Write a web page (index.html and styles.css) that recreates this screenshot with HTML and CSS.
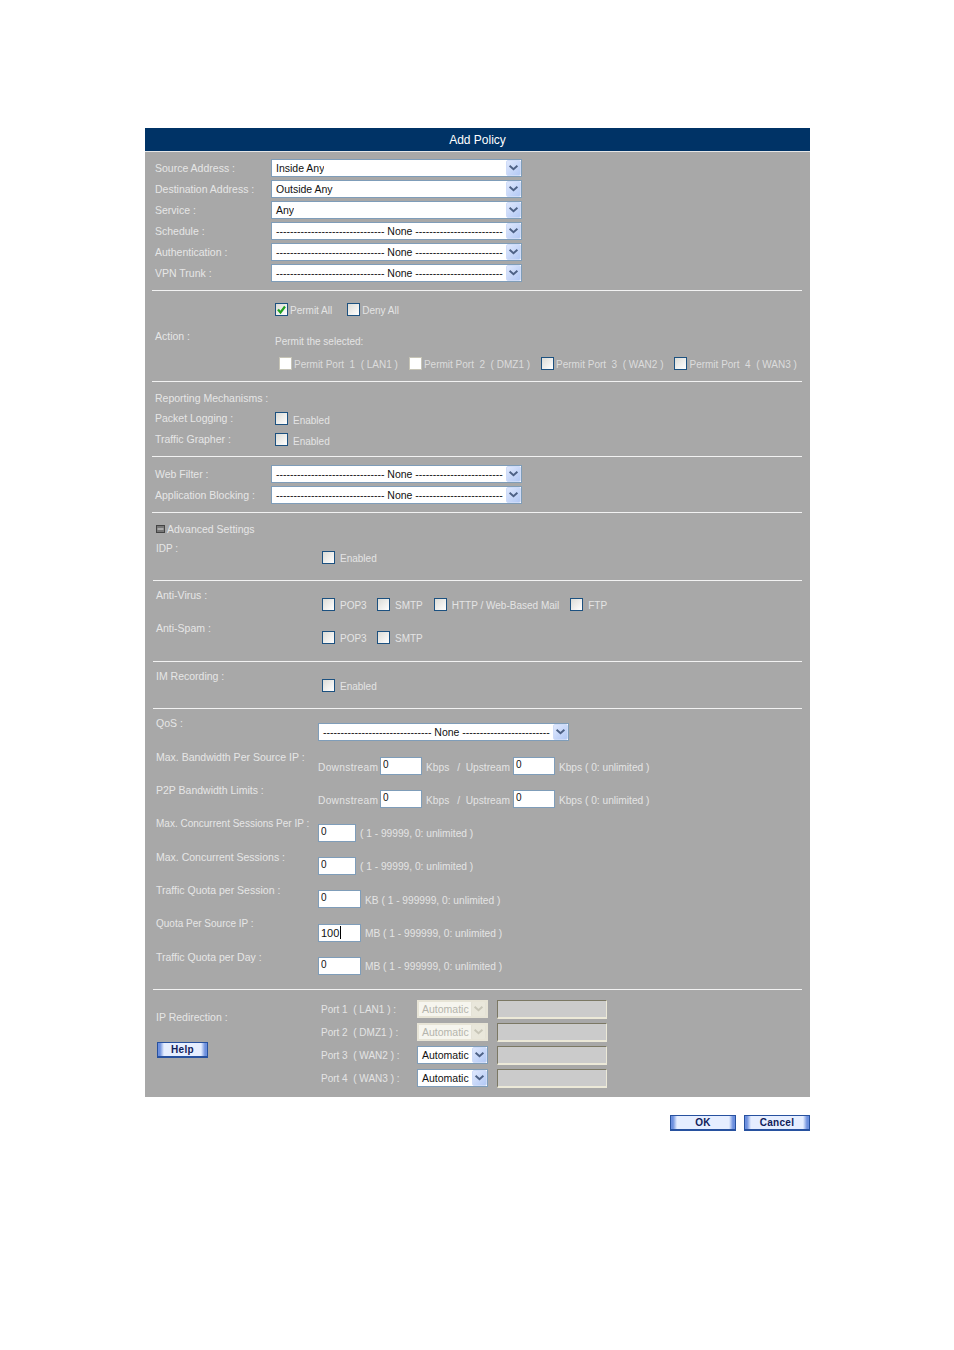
FILE: index.html
```html
<!DOCTYPE html>
<html lang="en">
<head>
<meta charset="utf-8">
<title>Add Policy</title>
<link rel="stylesheet" href="styles.css">
</head>
<body>
<main class="page">
<form class="panel">
  <h1 class="title">Add Policy</h1>

  <section class="sec sec-basic">
    <div class="sel-row"><span class="lbl">Source Address :</span><div class="sel wide"><span class="sel-text">Inside Any</span><span class="sel-btn"><svg viewBox="0 0 15 15"><polyline points="3,5 7.5,9 12,5"/></svg></span></div></div>
    <div class="sel-row"><span class="lbl">Destination Address :</span><div class="sel wide"><span class="sel-text">Outside Any</span><span class="sel-btn"><svg viewBox="0 0 15 15"><polyline points="3,5 7.5,9 12,5"/></svg></span></div></div>
    <div class="sel-row"><span class="lbl">Service :</span><div class="sel wide"><span class="sel-text">Any</span><span class="sel-btn"><svg viewBox="0 0 15 15"><polyline points="3,5 7.5,9 12,5"/></svg></span></div></div>
    <div class="sel-row"><span class="lbl">Schedule :</span><div class="sel wide"><span class="sel-text">------------------------------- None -------------------------</span><span class="sel-btn"><svg viewBox="0 0 15 15"><polyline points="3,5 7.5,9 12,5"/></svg></span></div></div>
    <div class="sel-row"><span class="lbl">Authentication :</span><div class="sel wide"><span class="sel-text">------------------------------- None -------------------------</span><span class="sel-btn"><svg viewBox="0 0 15 15"><polyline points="3,5 7.5,9 12,5"/></svg></span></div></div>
    <div class="sel-row"><span class="lbl">VPN Trunk :</span><div class="sel wide"><span class="sel-text">------------------------------- None -------------------------</span><span class="sel-btn"><svg viewBox="0 0 15 15"><polyline points="3,5 7.5,9 12,5"/></svg></span></div></div>
  </section>

  <section class="sec sec-action">
    <span class="lbl">Action :</span>
    <div class="action-body">
      <div class="checks action-top">
        <label class="chk"><span class="cb"><svg viewBox="0 0 11 11"><polyline points="2,5.5 4.5,8.5 9,2.5"/></svg></span><span class="chk-text">Permit All</span></label>
        <label class="chk"><span class="cb"></span><span class="chk-text">Deny All</span></label>
      </div>
      <p class="hint">Permit the selected:</p>
      <div class="checks ports">
        <label class="chk"><span class="cb off"></span><span class="chk-text">Permit Port&nbsp; 1 &nbsp;( LAN1 )</span></label>
        <label class="chk"><span class="cb off"></span><span class="chk-text">Permit Port&nbsp; 2 &nbsp;( DMZ1 )</span></label>
        <label class="chk"><span class="cb"></span><span class="chk-text">Permit Port&nbsp; 3 &nbsp;( WAN2 )</span></label>
        <label class="chk"><span class="cb"></span><span class="chk-text">Permit Port&nbsp; 4 &nbsp;( WAN3 )</span></label>
      </div>
    </div>
  </section>

  <section class="sec sec-report">
    <div class="lbl report-title">Reporting Mechanisms :</div>
    <div class="report-row"><span class="lbl">Packet Logging :</span><label class="chk low"><span class="cb"></span><span class="chk-text">Enabled</span></label></div>
    <div class="report-row"><span class="lbl">Traffic Grapher :</span><label class="chk low"><span class="cb"></span><span class="chk-text">Enabled</span></label></div>
  </section>

  <section class="sec sec-filter">
    <div class="sel-row"><span class="lbl">Web Filter :</span><div class="sel wide"><span class="sel-text">------------------------------- None -------------------------</span><span class="sel-btn"><svg viewBox="0 0 15 15"><polyline points="3,5 7.5,9 12,5"/></svg></span></div></div>
    <div class="sel-row"><span class="lbl">Application Blocking :</span><div class="sel wide"><span class="sel-text">------------------------------- None -------------------------</span><span class="sel-btn"><svg viewBox="0 0 15 15"><polyline points="3,5 7.5,9 12,5"/></svg></span></div></div>
  </section>

  <section class="sec sec-adv">
    <div class="adv-head"><svg class="adv-icon" viewBox="0 0 9 8"><rect x="0.5" y="0.5" width="8" height="7"/><line x1="1.5" y1="4" x2="7.5" y2="4"/></svg><span class="lbl">Advanced Settings</span></div>
    <div class="adv-row idp"><span class="lbl lbl-sm">IDP :</span><div class="checks adv-checks"><label class="chk"><span class="cb"></span><span class="chk-text">Enabled</span></label></div></div>
  </section>

  <section class="sec sec-av">
    <div class="adv-row av"><span class="lbl">Anti-Virus :</span><div class="checks adv-checks">
      <label class="chk"><span class="cb"></span><span class="chk-text pop">POP3</span></label>
      <label class="chk"><span class="cb"></span><span class="chk-text">SMTP</span></label>
      <label class="chk"><span class="cb"></span><span class="chk-text">HTTP / Web-Based Mail</span></label>
      <label class="chk"><span class="cb"></span><span class="chk-text">FTP</span></label>
    </div></div>
    <div class="adv-row av"><span class="lbl">Anti-Spam :</span><div class="checks adv-checks">
      <label class="chk"><span class="cb"></span><span class="chk-text pop">POP3</span></label>
      <label class="chk"><span class="cb"></span><span class="chk-text">SMTP</span></label>
    </div></div>
  </section>

  <section class="sec sec-im">
    <div class="adv-row"><span class="lbl">IM Recording :</span><div class="checks adv-checks"><label class="chk"><span class="cb"></span><span class="chk-text">Enabled</span></label></div></div>
  </section>

  <section class="sec sec-qos">
    <div class="q-row q-first"><span class="lbl">QoS :</span><div class="q-ctl q-ctl-sel"><div class="sel wide"><span class="sel-text">------------------------------- None -------------------------</span><span class="sel-btn"><svg viewBox="0 0 15 15"><polyline points="3,5 7.5,9 12,5"/></svg></span></div></div></div>
    <div class="q-row"><span class="lbl">Max. Bandwidth Per Source IP :</span><div class="q-ctl"><span class="ds">Downstream</span><input class="inp w42" value="0" readonly><span>Kbps</span><span class="slash">/ &nbsp;Upstream</span><input class="inp w42" value="0" readonly><span>Kbps ( 0: unlimited )</span></div></div>
    <div class="q-row"><span class="lbl">P2P Bandwidth Limits :</span><div class="q-ctl"><span class="ds">Downstream</span><input class="inp w42" value="0" readonly><span>Kbps</span><span class="slash">/ &nbsp;Upstream</span><input class="inp w42" value="0" readonly><span>Kbps ( 0: unlimited )</span></div></div>
    <div class="q-row"><span class="lbl lbl-sm">Max. Concurrent Sessions Per IP :</span><div class="q-ctl"><input class="inp w38" value="0" readonly><span>( 1 - 99999, 0: unlimited )</span></div></div>
    <div class="q-row"><span class="lbl">Max. Concurrent Sessions :</span><div class="q-ctl"><input class="inp w38" value="0" readonly><span>( 1 - 99999, 0: unlimited )</span></div></div>
    <div class="q-row"><span class="lbl">Traffic Quota per Session :</span><div class="q-ctl"><input class="inp w43" value="0" readonly><span>KB ( 1 - 999999, 0: unlimited )</span></div></div>
    <div class="q-row"><span class="lbl lbl-sm">Quota Per Source IP :</span><div class="q-ctl"><span class="inp w43 focus">100<i class="caret"></i></span><span>MB ( 1 - 999999, 0: unlimited )</span></div></div>
    <div class="q-row"><span class="lbl">Traffic Quota per Day :</span><div class="q-ctl"><input class="inp w43" value="0" readonly><span>MB ( 1 - 999999, 0: unlimited )</span></div></div>
  </section>

  <section class="sec-ip">
    <div class="ip-left">
      <span class="lbl">IP Redirection :</span>
      <button type="button" class="btn btn-help">Help</button>
    </div>
    <div class="ip-rows">
      <div class="ip-row"><span class="ip-name">Port 1 &nbsp;( LAN1 ) :</span><div class="sel auto dis"><span class="sel-text">Automatic</span><span class="sel-btn"><svg viewBox="0 0 15 15"><polyline points="3,5 7.5,9 12,5"/></svg></span></div><input class="ip-field" readonly></div>
      <div class="ip-row"><span class="ip-name">Port 2 &nbsp;( DMZ1 ) :</span><div class="sel auto dis"><span class="sel-text">Automatic</span><span class="sel-btn"><svg viewBox="0 0 15 15"><polyline points="3,5 7.5,9 12,5"/></svg></span></div><input class="ip-field" readonly></div>
      <div class="ip-row"><span class="ip-name">Port 3 &nbsp;( WAN2 ) :</span><div class="sel auto"><span class="sel-text">Automatic</span><span class="sel-btn"><svg viewBox="0 0 15 15"><polyline points="3,5 7.5,9 12,5"/></svg></span></div><input class="ip-field" readonly></div>
      <div class="ip-row"><span class="ip-name">Port 4 &nbsp;( WAN3 ) :</span><div class="sel auto"><span class="sel-text">Automatic</span><span class="sel-btn"><svg viewBox="0 0 15 15"><polyline points="3,5 7.5,9 12,5"/></svg></span></div><input class="ip-field" readonly></div>
    </div>
  </section>
</form>

<div class="actions">
  <button type="button" class="btn btn-main">OK</button>
  <button type="button" class="btn btn-main">Cancel</button>
</div>
</main>
</body>
</html>
```
FILE: styles.css
```css
* { box-sizing: border-box; }
html, body { margin: 0; background: #fff; }
body { font-family: "Liberation Sans", Arial, sans-serif; font-size: 10px; color: #e4e4e4; }

.page { width: 954px; height: 1350px; padding: 128px 144px 0 145px; }
.panel { display: block; background: #a8a8a8; }

.title {
  margin: 0; height: 24px; line-height: 24px;
  background: #003366; border-bottom: 1px solid #e6e6e6;
  color: #fff; font-size: 12px; font-weight: normal; text-align: center;
}

.lbl { font-size: 10.5px; line-height: 14px; white-space: nowrap; color: #e6e6e6; }
.lbl-sm { font-size: 10px; }

.sec { margin: 0 8px 0 7px; padding-left: 3px; border-bottom: 1px solid #f2f2f2; }
.sec-adv, .sec-av, .sec-im, .sec-qos { margin-left: 8px; padding-left: 2px; }

/* selects */
.sel {
  display: flex; align-items: center; justify-content: space-between;
  height: 18px; background: #fff; border: 1px solid #7f9db9;
  color: #111; font-size: 10.5px; white-space: nowrap; overflow: hidden;
}
.sel.wide { width: 251px; }
.sel-text { padding-left: 4px; line-height: 14px; overflow: hidden; }
.sel-btn {
  flex: none; width: 15px; height: 16px;
  background: linear-gradient(135deg, #dfe8fd, #b3c9f5);
  border: 1px solid #cfdcf8; border-radius: 2px;
}
.sel-btn svg { display: block; width: 13px; height: 14px; }
.sel-btn polyline { fill: none; stroke: #4d6185; stroke-width: 2.2; }

.sel-row { display: grid; grid-template-columns: 116px 251px; height: 21px; }
.sel-row .lbl { padding-top: 2px; }

.sec-basic { height: 139px; padding-top: 7px; }
.sec-filter { height: 56px; padding-top: 8px; }

/* checkboxes */
.checks { display: flex; align-items: flex-start; }
.chk { display: flex; align-items: flex-start; white-space: nowrap; }
.cb {
  flex: none; display: block; width: 13px; height: 13px;
  border: 1px solid #1c5180;
  background: linear-gradient(135deg, #dcdcd7, #ffffff);
}
.cb svg { display: block; width: 11px; height: 11px; }
.cb polyline { fill: none; stroke: #21a121; stroke-width: 2.2; }
.cb.off { border-color: #c6c4b6; background: #fff; }
.chk-text { margin: 1px 0 0 5px; line-height: 14px; color: #e4e4e4; }
.pop { width: 26px; }

/* action */
.sec-action { display: grid; grid-template-columns: 120px 1fr; align-items: center; height: 91px; }
.action-body { display: flex; flex-direction: column; align-self: start; padding-top: 12px; }
.action-top { height: 14px; gap: 15px; }
.action-top .chk-text { margin-left: 2px; }
.hint { margin: 18px 0 0; line-height: 14px; height: 14px; }
.ports { margin: 8px 0 0 4px; height: 14px; gap: 11px; width: 540px; }
.ports .chk-text { margin-left: 2px; color: #dcdcdc; }

/* reporting */
.sec-report { height: 75px; padding-top: 9px; }
.report-title { height: 20px; }
.report-row { display: grid; grid-template-columns: 120px 1fr; height: 21px; }
.low { height: 14px; margin-top: 2px; }
.low .cb { margin-top: -1px; }

/* advanced */
.adv-head { display: flex; align-items: center; gap: 2px; height: 14px; margin-left: 1px; }
.adv-icon { width: 9px; height: 8px; }
.adv-icon rect { fill: #777; stroke: #444; }
.adv-icon line { stroke: #e0e0e0; }
.sec-adv { height: 68px; padding-top: 9px; }
.adv-row { display: grid; grid-template-columns: 166px 1fr; padding-left: 1px; }
.adv-row .lbl { height: 14px; }
.adv-checks { height: 14px; margin-top: 10px; gap: 11px; }
.idp { margin-top: 6px; }
.idp .adv-checks { margin-top: 9px; }
.sec-av { height: 81px; padding-top: 7px; }
.av { height: 33px; }
.sec-im { height: 47px; padding-top: 7px; }

/* QoS */
.sec-qos { height: 281px; padding-top: 7px; }
.q-row { display: grid; grid-template-columns: 162px 1fr; height: 33.33px; padding-left: 1px; }
.q-first { height: 34px; }
.q-ctl { display: flex; align-items: center; gap: 3px; height: 18px; margin-top: 7px; white-space: nowrap; padding-top: 2px; font-size: 10.2px; }
.q-ctl-sel { margin-top: 7px; padding-top: 0; font-size: 10.5px; }
.ds { width: 59px; letter-spacing: .3px; }
.slash { margin-left: 5px; }
.inp {
  display: block; height: 18px; margin: -2px 1px 0 0; padding: 0 0 3px 2px;
  border: 1px solid #7f9db9; background: #fff; color: #111;
  font: 10px "Liberation Sans", Arial, sans-serif; outline: none;
}
.w42 { width: 42px; }
.w38 { width: 38px; }
.w43 { width: 43px; }
.focus { font-size: 11px; line-height: 14px; padding: 1px 0 0 2px; }
.caret { display: inline-block; width: 1px; height: 13px; background: #000; vertical-align: top; margin-left: 1px; }

/* IP */
.sec-ip { display: grid; grid-template-columns: 165px 1fr; height: 107px; padding: 10px 0 0 11px; }
.ip-left { display: flex; flex-direction: column; align-items: flex-start; padding-top: 10px; }
.ip-rows { display: flex; flex-direction: column; }
.ip-row { display: grid; grid-template-columns: 96px 71px auto; justify-content: start; height: 23px; align-items: start; }
.ip-name { line-height: 20px; font-size: 10px; }
.sel.auto { width: 71px; }
.ip-field {
  display: block; width: 110px; height: 19px; margin-left: 9px;
  background: #cbcbcb; border: 1px solid; border-color: #7b7864 #ece9d8 #ece9d8 #7b7864;
  border-bottom-width: 2px; outline: none;
}
.sel.dis { border: 2px solid #e7e4d6; background: #f6f5ee; color: #b4b4ac; }
.sel.dis .sel-text { padding-left: 3px; }
.sel.dis .sel-btn { background: #e9e7db; border-color: #e4e2d6; }
.sel.dis polyline { stroke: #c8c6b8; }

/* buttons */
.btn {
  display: block; padding: 0; height: 16px;
  border: 1px solid #27519f; border-bottom-width: 2px;
  background: linear-gradient(90deg, #6d90de 0, #6d90de 2px, #e6eeff 6px, #e6eeff calc(100% - 6px), #6d90de calc(100% - 2px), #6d90de 100%);
  color: #10205a; font: bold 10px "Liberation Sans", Arial, sans-serif; line-height: 12px; letter-spacing: .3px;
  text-align: center;
}
.btn-help { width: 51px; margin: 18px 0 0 1px; }
.btn-main { width: 66px; }
.actions { display: flex; justify-content: flex-end; gap: 8px; padding-top: 18px; }
```
